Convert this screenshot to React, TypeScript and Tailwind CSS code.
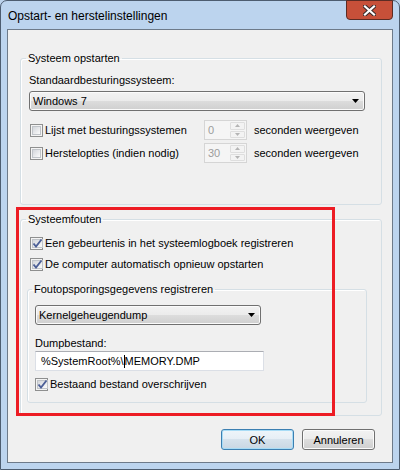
function Check({ checked }: { checked?: boolean }) {
  return (
    <span className="w-[13px] h-[13px] shrink-0 border border-[#8e8f8f] bg-[#f4f4f4] p-[1px] flex">
      <span className="flex-1 border border-[#c0c4c9] bg-gradient-to-br from-[#d3d6db] to-[#fbfbfb] flex items-center justify-center">
        {checked && (
          <svg width="11" height="11" viewBox="0 0 11 11" className="-m-[1px]">
            <path d="M1.5 5.5 L4 8.5 L9.5 1.5" fill="none" stroke="#4c5f97" strokeWidth="1.9" />
          </svg>
        )}
      </span>
    </span>
  );
}

function Dropdown({ value, width }: { value: string; width: string }) {
  return (
    <div
      className={`${width} h-[20px] rounded-[3px] border border-[#707070] bg-[linear-gradient(#f2f2f2,#ebebeb_50%,#dddddd_50%,#cfcfcf)] shadow-[inset_0_0_0_1px_#fbfbfb] flex items-center pl-[3px] pr-[5px]`}
    >
      <span className="flex-1 leading-[16px]">{value}</span>
      <svg width="7" height="4" viewBox="0 0 7 4">
        <path d="M0 0H7L3.5 4Z" fill="#000" />
      </svg>
    </div>
  );
}

function Spin({ value }: { value: string }) {
  return (
    <div className="w-[43px] h-[20px] flex border border-[#d5d5d5] bg-[#f5f5f5]">
      <span className="flex-1 pl-[3px] leading-[18px] text-[#9c9c9c]">{value}</span>
      <div className="w-[16px] flex flex-col gap-[1px] py-[1px] pr-[1px]">
        <div className="flex-1 border border-[#dedede] rounded-[1px] bg-[#f3f3f3] flex items-center justify-center">
          <svg width="5" height="3" viewBox="0 0 5 3">
            <path d="M0 3H5L2.5 0Z" fill="#b4b4b4" />
          </svg>
        </div>
        <div className="flex-1 border border-[#dedede] rounded-[1px] bg-[#f3f3f3] flex items-center justify-center">
          <svg width="5" height="3" viewBox="0 0 5 3">
            <path d="M0 0H5L2.5 3Z" fill="#b4b4b4" />
          </svg>
        </div>
      </div>
    </div>
  );
}

function TimeoutRow({ label, value, className }: { label: string; value: string; className: string }) {
  return (
    <div className={`${className} h-[20px] flex items-center`}>
      <div className="w-[175px] flex items-center gap-[2px] pl-[1px]">
        <Check />
        <span className="leading-[16px]">{label}</span>
      </div>
      <Spin value={value} />
      <span className="ml-[7px] leading-[16px]">seconden weergeven</span>
    </div>
  );
}

function Btn({ label, primary }: { label: string; primary?: boolean }) {
  return (
    <button
      className={`w-[73px] h-[21px] rounded-[3px] border leading-[16px] ${
        primary
          ? "border-[#3c7fb1] bg-[linear-gradient(#eef5fa,#e6eef5_50%,#d6e2ec_50%,#c9d7e3)] shadow-[inset_0_0_0_1px_#a8dcf6]"
          : "border-[#707070] bg-[linear-gradient(#f2f2f2,#ebebeb_50%,#dddddd_50%,#cfcfcf)] shadow-[inset_0_0_0_1px_#fbfbfb]"
      }`}
    >
      {label}
    </button>
  );
}

export default function App() {
  return (
    <div className="relative w-[400px] h-[470px] bg-[#bcd3ec] font-['Liberation_Sans',Arial,sans-serif] text-[11px] text-black">
      <div className="h-full flex flex-col rounded-t-[7px] border border-[#4d5d70] bg-[#bcd4ee]">
        {/* title bar */}
        <div className="h-[28px] flex items-center pl-[7px] pr-[6px]">
          <span className="flex-1 text-[12px] leading-[16px] pt-[1px]">Opstart- en herstelinstellingen</span>
          <span className="self-start -mt-[1px] w-[47px] h-[20px] rounded-b-[4px] border border-[#5b2c24] bg-[#c75039] flex items-center justify-center">
            <svg width="13" height="11" viewBox="0 0 13 11">
              <path d="M2 1.5 L11 9.5 M11 1.5 L2 9.5" stroke="#3a2b2b" strokeWidth="4.2" strokeLinecap="square" />
              <path d="M2 1.5 L11 9.5 M11 1.5 L2 9.5" stroke="#ffffff" strokeWidth="2.2" strokeLinecap="square" />
            </svg>
          </span>
        </div>

        {/* client area */}
        <div className="flex-1 flex px-[6px] pb-[6px]">
          <div className="flex-1 flex flex-col border border-[#6d7a89] bg-[#f0f0f0] pt-[20px] pl-[12px] pr-[10px] pb-[12px]">
            <fieldset className="border border-[#d5dfe5] rounded-[3px] shadow-[inset_1px_1px_0_#fff] pl-[8px] pr-[16px] pb-[41px]">
              <legend className="-ml-[3px] px-[2px] leading-[16px]">Systeem opstarten</legend>
              <div className="mt-[6px] leading-[16px]">Standaardbesturingssysteem:</div>
              <div className="mt-[3px]">
                <Dropdown value="Windows 7" width="w-full" />
              </div>
              <TimeoutRow className="mt-[9px]" label="Lijst met besturingssystemen" value="0" />
              <TimeoutRow className="mt-[3px]" label="Herstelopties (indien nodig)" value="30" />
            </fieldset>

            <fieldset className="mt-[6px] border border-[#d5dfe5] rounded-[3px] shadow-[inset_1px_1px_0_#fff] pl-[8px] pr-[14px] pb-[12px]">
              <legend className="-ml-[3px] px-[2px] leading-[16px]">Systeemfouten</legend>
              <label className="mt-[8px] h-[16px] flex items-center gap-[2px] pl-[1px]">
                <Check checked />
                <span className="leading-[16px]">Een gebeurtenis in het systeemlogboek registreren</span>
              </label>
              <label className="mt-[5px] h-[16px] flex items-center gap-[2px] pl-[1px]">
                <Check checked />
                <span className="leading-[16px]">De computer automatisch opnieuw opstarten</span>
              </label>

              <fieldset className="mt-[9px] -ml-[2px] w-[340px] border border-[#d5dfe5] rounded-[3px] shadow-[inset_1px_1px_0_#fff] pl-[7px] pb-[10px]">
                <legend className="-ml-[3px] px-[2px] leading-[16px]">Foutopsporingsgegevens registreren</legend>
                <div className="mt-[8px]">
                  <Dropdown value="Kernelgeheugendump" width="w-[226px]" />
                </div>
                <div className="mt-[11px] leading-[15px]">Dumpbestand:</div>
                <div className="w-[229px] h-[20px] border border-[#dbdfe6] border-t-[#abadb3] bg-white pl-[5px] flex items-center">
                  <span className="leading-[16px]">%SystemRoot%\</span>
                  <span className="inline-block w-[1px] h-[13px] bg-black" />
                  <span className="leading-[16px]">MEMORY.DMP</span>
                </div>
                <label className="mt-[5px] h-[16px] flex items-center gap-[2px]">
                  <Check checked />
                  <span className="leading-[16px]">Bestaand bestand overschrijven</span>
                </label>
              </fieldset>
            </fieldset>

            <div className="mt-auto flex justify-end gap-[8px] pr-[7px]">
              <Btn label="OK" primary />
              <Btn label="Annuleren" />
            </div>
          </div>
        </div>
      </div>

      {/* red annotation frame */}
      <div className="absolute left-[16px] top-[207px] w-[319px] h-[209px] border-[3px] border-[#ed1c24]" />
    </div>
  );
}
